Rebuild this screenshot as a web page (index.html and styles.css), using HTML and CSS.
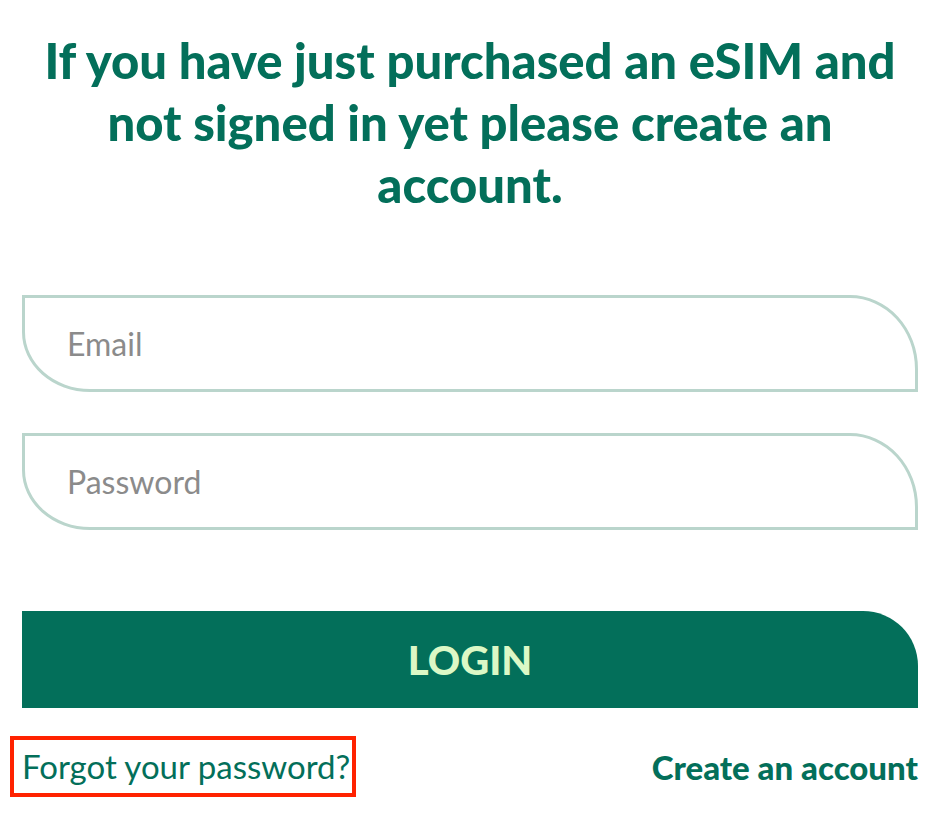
FILE: index.html
```html
<!DOCTYPE html>
<html lang="en">
<head>
<meta charset="UTF-8">
<meta name="viewport" content="width=device-width, initial-scale=1.0">
<title>Login</title>
<link rel="stylesheet" href="styles.css">
</head>
<body>
  <div class="container">
    <h1>If you have just purchased an eSIM and not signed in yet please create an account.</h1>

    <!-- Login form -->
    <form class="login-form" action="/login" method="POST">
      <input class="field" type="email" name="email" placeholder="Email">
      <input class="field" type="password" name="password" placeholder="Password">
      <button class="login-btn" type="submit">LOGIN</button>
    </form>

    <div class="links">
      <a class="forgot" href="#">Forgot your password?</a>
      <a class="create" href="#">Create an account</a>
    </div>
  </div>
</body>
</html>
```

FILE: styles.css
```css
body {
  margin: 0;
  font-family: Lato, "Open Sans", sans-serif;
  background-color: #FFFFFF;
  color: #036f5a;
}

.container {
  padding: 0 24px 0 22px;
}

h1 {
  margin: 29px 10px 0;
  font-size: 49px;
  font-weight: 900;
  line-height: 62px;
  text-align: center;
  color: #036f5a;
}

.login-form {
  display: flex;
  flex-direction: column;
  margin-top: 80px;
}

.field {
  box-sizing: border-box;
  height: 97px;
  margin-bottom: 41px;
  padding: 0 0 0 42px;
  border: 3px solid #bad5cc;
  border-radius: 0 68px 0 68px / 0 74px 0 60px;
  font-family: inherit;
  font-size: 32px;
  color: #333333;
  outline: none;
}

.field::placeholder {
  color: #8b8b8b;
}

.login-btn {
  height: 97px;
  margin-top: 40px;
  border: none;
  border-radius: 0 55px 0 0;
  background-color: #036f5a;
  color: #dcf8c6;
  font-family: inherit;
  font-size: 40px;
  font-weight: 900;
  cursor: pointer;
}

.links {
  display: flex;
  justify-content: space-between;
  align-items: center;
  margin-top: 28px;
}

.links a {
  color: #036f5a;
  text-decoration: none;
  font-size: 33px;
  line-height: 40px;
}

.forgot {
  margin-left: -12px;
  padding: 10px 6px 11px 12px;
  outline: 4px solid #ff2200;
  outline-offset: -4px;
}

.create {
  font-weight: 900;
}
```
